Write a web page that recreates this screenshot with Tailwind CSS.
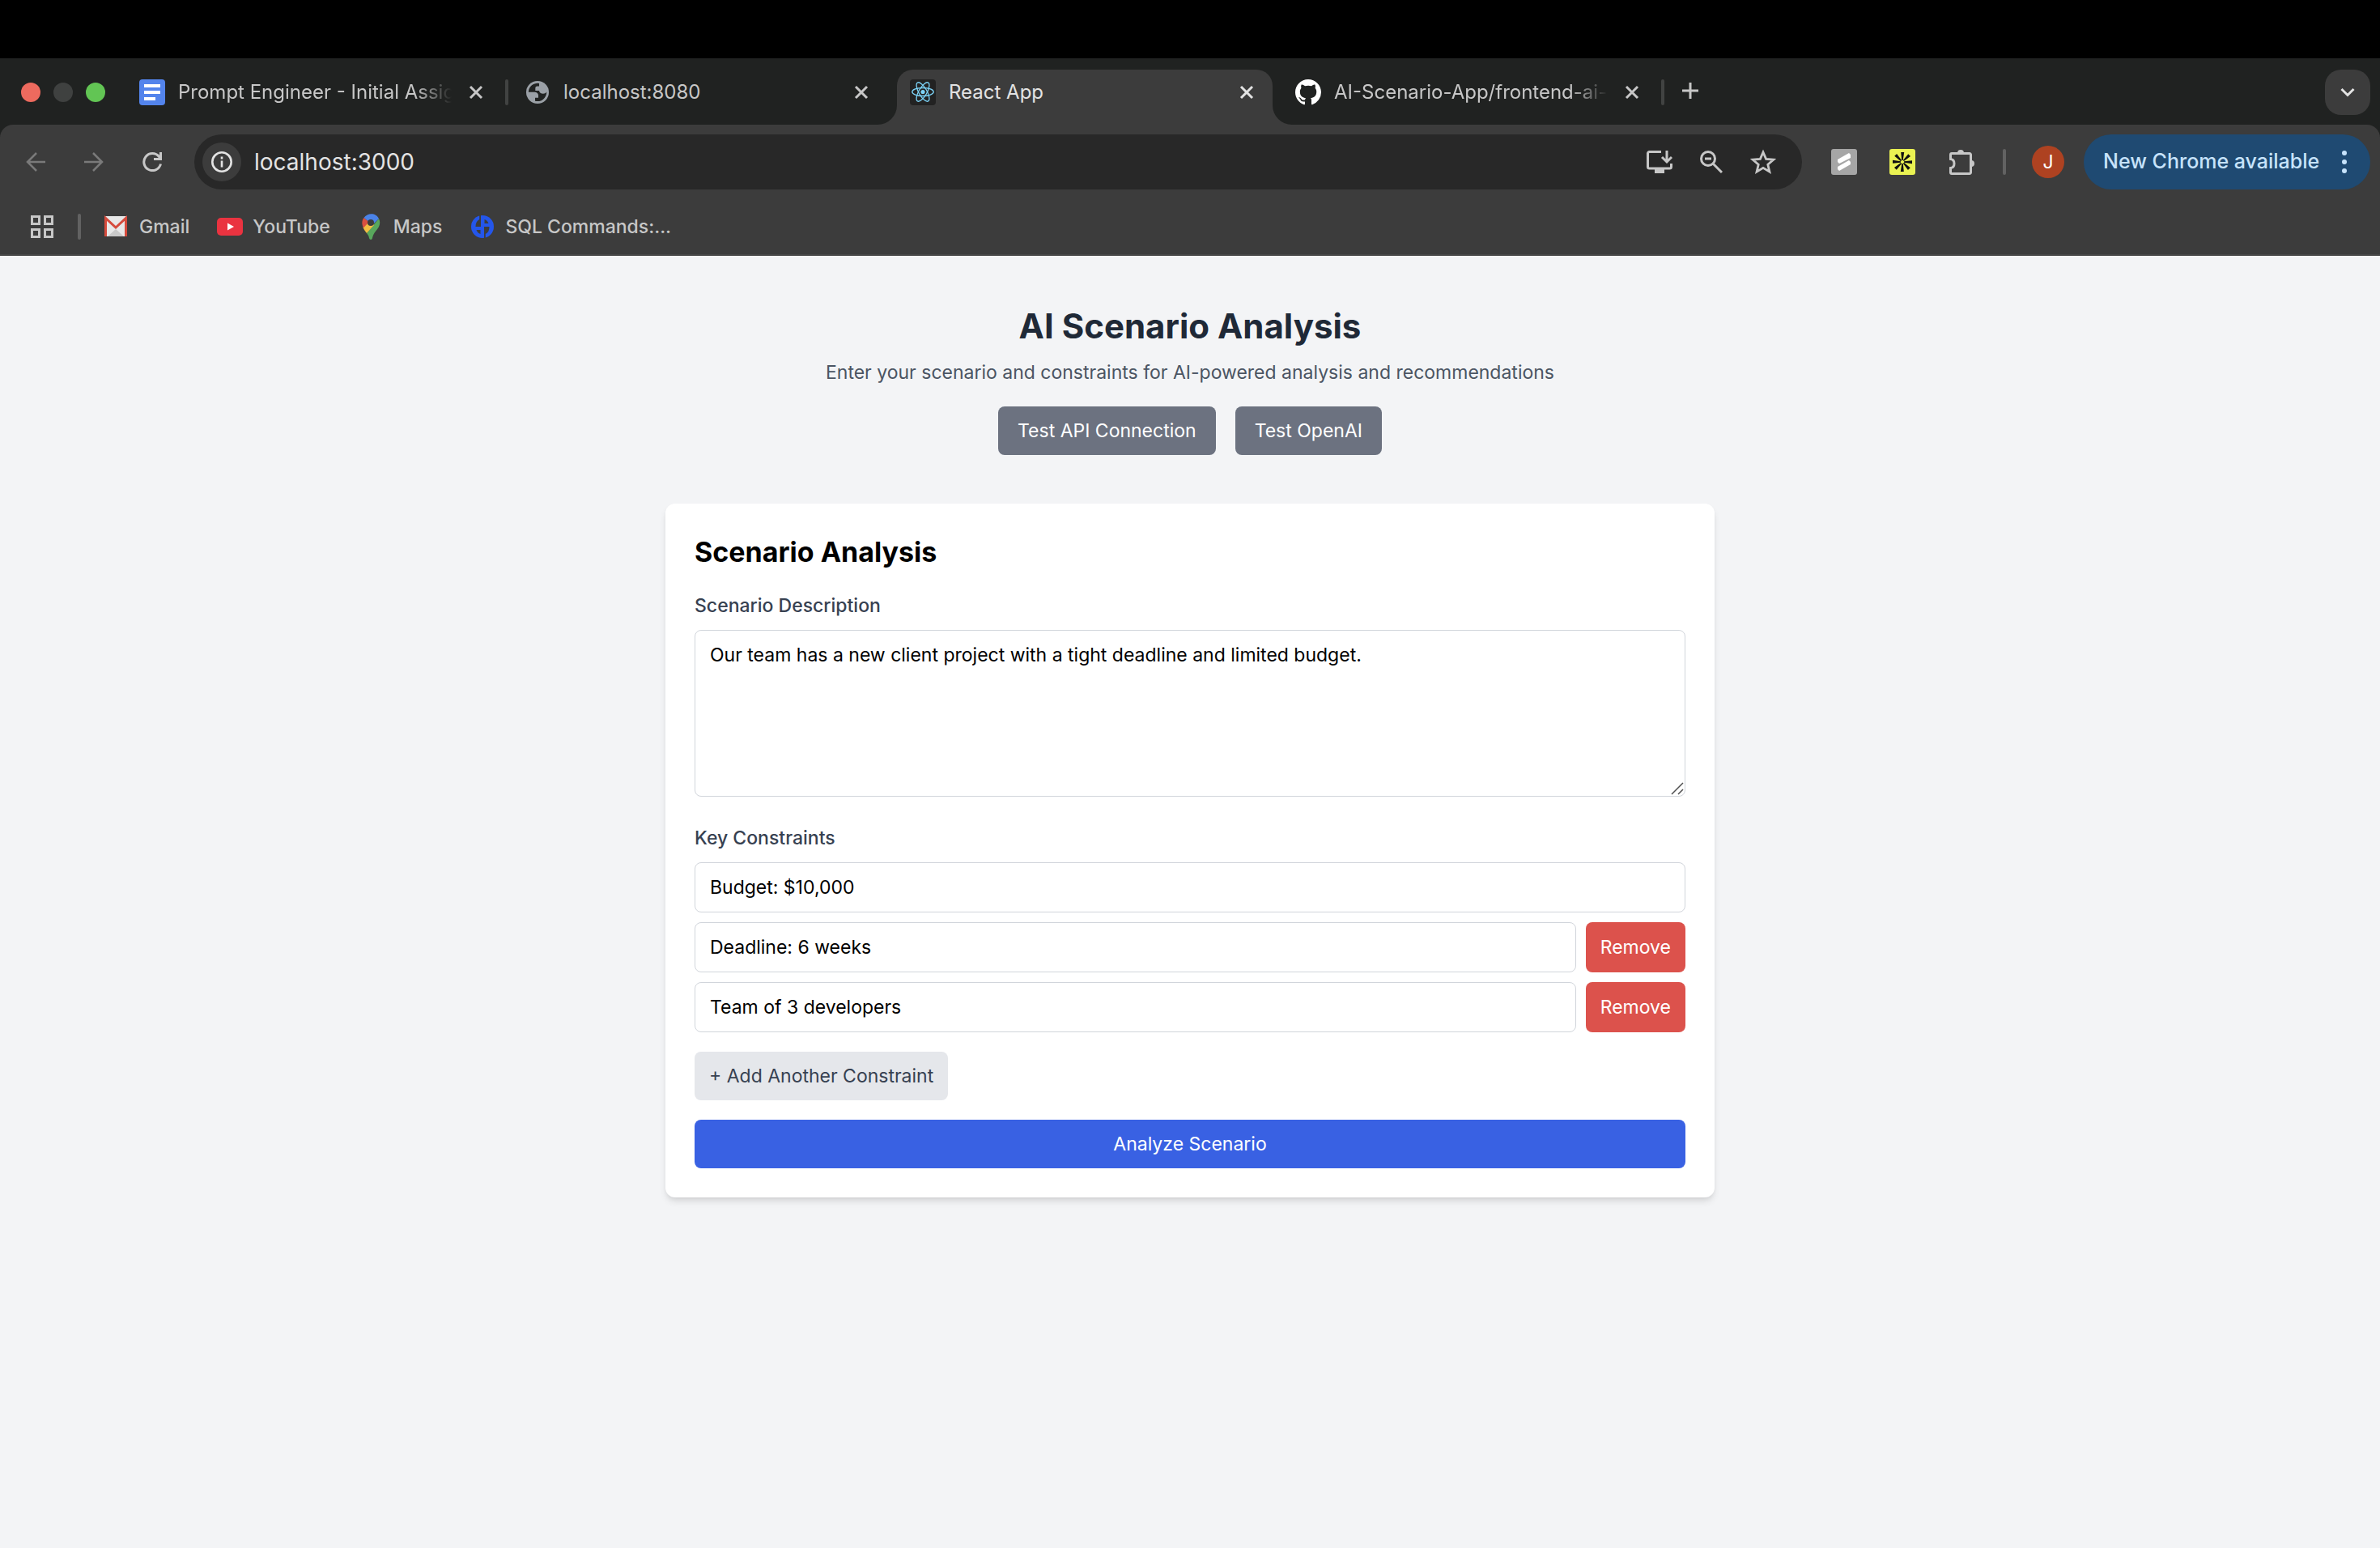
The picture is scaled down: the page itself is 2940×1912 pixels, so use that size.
<!DOCTYPE html>
<html lang="en">
<head>
<meta charset="utf-8">
<meta name="viewport" content="width=device-width, initial-scale=1">
<title>React App</title>
<script src="https://cdn.jsdelivr.net/npm/@tailwindcss/browser@4"></script>
</head>
<body class="flex min-h-screen flex-col bg-[#f3f4f6] font-['Inter',sans-serif]">

<div class="h-18 shrink-0 bg-black"></div>

<header class="shrink-0 bg-[#202221] text-[#c7c7c7]">
  <!-- Tab strip -->
  <div class="flex h-[82px] items-start pt-3.5 pr-3">
    <div class="flex h-14 w-[156px] shrink-0 items-center gap-4 pl-[26px]">
      <span class="size-6 rounded-full bg-[#ed6a5e]"></span>
      <span class="size-6 rounded-full bg-[#3f4140]"></span>
      <span class="size-6 rounded-full bg-[#62c554]"></span>
    </div>
    <nav class="flex items-start" aria-label="Tabs">
      <div class="flex h-14 w-[464px] items-center pr-5 pl-4">
        <svg class="mr-4 size-8 shrink-0" viewBox="0 0 32 32"><rect width="32" height="32" rx="4" fill="#5384ec"/><path fill="#fff" d="M6 6h20v4H6zM6 14h20v4H6zM6 22h14v4H6z"/></svg>
        <span class="flex-1 text-2xl whitespace-nowrap [mask-image:linear-gradient(to_right,#000_82%,transparent_95%)]">Prompt Engineer - Initial Assig</span>
        <button class="size-6" aria-label="Close tab"><svg viewBox="0 0 24 24" fill="none" stroke="currentColor" stroke-width="3"><path d="M5 5l14 14M19 5L5 19"/></svg></button>
      </div>
      <div class="flex h-14 w-3 items-center justify-center"><span class="h-8 w-1 rounded-full bg-[#414342]"></span></div>
      <div class="flex h-14 w-[464px] items-center pr-5 pl-4">
        <svg class="mr-4 size-8 shrink-0" viewBox="0 0 32 32"><circle cx="16" cy="16" r="14" fill="#9aa0a6"/><path fill="#202221" d="M18 5A11.200 11.200 0 0 0 4.800 15.700H12c3.300 0 5 1.700 5 4v3h-4v4A11.200 11.200 0 0 0 27.200 15.500c-1 1.700-2.500 2.200-4.200 2.200-3 0-4.500-1-5-3.700h-4.700v-3c0-1.700 1-2.500 2.400-2.500H18z"/></svg>
        <span class="flex-1 text-2xl whitespace-nowrap">localhost:8080</span>
        <button class="size-6" aria-label="Close tab"><svg viewBox="0 0 24 24" fill="none" stroke="currentColor" stroke-width="3"><path d="M5 5l14 14M19 5L5 19"/></svg></button>
      </div>
      <div class="w-3"></div>
      <div class="relative flex h-[68px] w-[464px] items-center rounded-t-[20px] bg-[#3c3c3c] pr-5 pb-3 pl-4 text-[#e3e3e3]">
        <svg class="absolute right-full bottom-0 size-6" viewBox="0 0 24 24"><path fill="#3c3c3c" d="M24 0v24H0A24 24 0 0 0 24 0z"/></svg>
        <svg class="absolute bottom-0 left-full size-6" viewBox="0 0 24 24"><path fill="#3c3c3c" d="M0 0v24h24A24 24 0 0 1 0 0z"/></svg>
        <svg class="mr-4 size-8 shrink-0" viewBox="0 0 32 32"><rect width="32" height="32" rx="4" fill="#222"/><circle cx="16" cy="15.500" r="2.600" fill="#7cd3f7"/><g fill="none" stroke="#7cd3f7" stroke-width="1.300"><ellipse cx="16" cy="15.500" rx="13.200" ry="5"/><ellipse cx="16" cy="15.500" rx="13.200" ry="5" transform="rotate(60 16 15.500)"/><ellipse cx="16" cy="15.500" rx="13.200" ry="5" transform="rotate(120 16 15.500)"/></g></svg>
        <span class="flex-1 text-2xl whitespace-nowrap">React App</span>
        <button class="size-6" aria-label="Close tab"><svg viewBox="0 0 24 24" fill="none" stroke="currentColor" stroke-width="3"><path d="M5 5l14 14M19 5L5 19"/></svg></button>
      </div>
      <div class="w-3"></div>
      <div class="flex h-14 w-[464px] items-center pr-5 pl-4">
        <svg class="mr-4 size-8 shrink-0" viewBox="0 0 16 16"><path fill="#fff" d="M8 0C3.580 0 0 3.580 0 8c0 3.540 2.290 6.530 5.470 7.590.4.070.55-.17.55-.38 0-.19-.01-.82-.01-1.490-2.010.37-2.530-.49-2.690-.94-.09-.23-.48-.94-.82-1.130-.28-.15-.68-.52-.01-.53.63-.01 1.080.58 1.230.82.72 1.210 1.870.87 2.330.66.070-.52.28-.87.51-1.070-1.780-.2-3.640-.89-3.640-3.950 0-.87.31-1.590.82-2.150-.08-.2-.36-1.020.08-2.120 0 0 .67-.21 2.200.82.64-.18 1.320-.27 2-.27s1.360.09 2 .27c1.530-1.040 2.200-.82 2.200-.82.44 1.100.16 1.920.08 2.120.51.56.82 1.270.82 2.150 0 3.070-1.870 3.750-3.650 3.950.29.25.54.73.54 1.480 0 1.070-.01 1.930-.01 2.200 0 .21.15.46.55.38A8.010 8.010 0 0 0 16 8c0-4.420-3.580-8-8-8z"/></svg>
        <span class="flex-1 text-2xl whitespace-nowrap [mask-image:linear-gradient(to_right,#000_82%,transparent_95%)]">AI-Scenario-App/frontend-ai-</span>
        <button class="size-6" aria-label="Close tab"><svg viewBox="0 0 24 24" fill="none" stroke="currentColor" stroke-width="3"><path d="M5 5l14 14M19 5L5 19"/></svg></button>
      </div>
      <div class="flex h-14 w-3 items-center justify-center"><span class="h-8 w-1 rounded-full bg-[#414342]"></span></div>
    </nav>
    <button class="flex size-14 items-center justify-center" aria-label="New tab"><svg class="size-6" viewBox="0 0 24 24" fill="none" stroke="currentColor" stroke-width="3"><path d="M12 0v20M2 10h20"/></svg></button>
    <button class="ml-auto flex size-14 items-center justify-center rounded-[20px] bg-[#3c3c3c] text-[#e3e3e3]" aria-label="Search tabs"><svg class="size-6" viewBox="0 0 24 24" fill="none" stroke="currentColor" stroke-width="3"><path d="M4.500 8l7.500 7.500L19.500 8"/></svg></button>
  </div>

  <div class="rounded-t-2xl border-b-2 border-[#474747] bg-[#3c3c3c]">
    <!-- Toolbar -->
    <div class="flex h-[92px] items-center pr-3 pl-8">
      <div class="flex gap-12 text-[#7a7a7a]">
        <button aria-label="Back"><svg class="size-6" viewBox="0 0 24 24" fill="none" stroke="currentColor" stroke-width="2.500"><path d="M24 12H2M13 1L2 12l11 11"/></svg></button>
        <button aria-label="Forward"><svg class="size-6" viewBox="0 0 24 24" fill="none" stroke="currentColor" stroke-width="2.500"><path d="M0 12h22M11 1l11 11-11 11"/></svg></button>
        <button class="text-[#c7c7c7]" aria-label="Reload"><svg class="size-6" viewBox="0 0 24 24" fill="none" stroke="currentColor" stroke-width="3"><path d="M22.500 14.500A10.500 10.500 0 1 1 20.500 5.500l2 2.500M22.500 0v8.500H14"/></svg></button>
      </div>
      <div class="ml-10 flex h-[68px] flex-1 items-center rounded-full bg-[#282828] pr-8 pl-2.5">
        <button class="flex size-12 items-center justify-center rounded-full bg-[#3c3c3c] text-[#e3e3e3]" aria-label="Site information"><svg class="size-[26px]" viewBox="0 0 26 26" fill="none" stroke="currentColor" stroke-width="2.600"><circle cx="13" cy="13" r="11.700"/><path d="M13 11.500v8M13 6.500v3"/></svg></button>
        <input class="ml-4 min-w-0 flex-1 bg-transparent text-[28px] text-[#e3e3e3] outline-none" type="text" aria-label="Address" value="localhost:3000">
        <div class="flex items-center gap-[34px]">
          <button aria-label="Install app"><svg class="size-8" viewBox="0 0 32 32" fill="none" stroke="currentColor" stroke-width="3"><path d="M18 3.500H3.500a2 2 0 0 0-2 2V22a2 2 0 0 0 2 2h25a2 2 0 0 0 2-2v-4M25 2v13M19 10l6 6 6-6"/><path fill="currentColor" stroke="none" d="M10 24h12v6H10z"/></svg></button>
          <button aria-label="Zoom"><svg class="h-8 w-7" viewBox="0 0 28 32" fill="none" stroke="currentColor" stroke-width="3"><circle cx="10" cy="12" r="8.500"/><path d="M16 18l11 11M6 12h8"/></svg></button>
          <button aria-label="Bookmark this page"><svg class="size-8" viewBox="0 0 32 32" fill="none" stroke="currentColor" stroke-width="2.800"><path d="M16 4l3.600 8.400 9.100.8-6.900 6 2.100 8.900L16 23.300l-7.900 4.800 2.100-8.900-6.900-6 9.100-.8z"/></svg></button>
        </div>
      </div>
      <div class="flex items-center gap-10 pl-9">
        <button aria-label="Scribe"><svg class="size-8" viewBox="0 0 32 32"><rect width="32" height="32" rx="3" fill="#a6a6a6"/><path fill="#fff" d="M8 13l14-8 2 2v4l-14 7-2-2zM8 22l14-8 2 2v3l-14 8-2-2z"/></svg></button>
        <button aria-label="Extension"><svg class="size-8" viewBox="0 0 32 32"><rect width="32" height="32" rx="3" fill="#eaf252"/><g fill="#111"><path id="ray" d="M15.200 14l-1-10h4l-1.500 10z"/><use href="#ray" transform="rotate(45 16 16)"/><use href="#ray" transform="rotate(90 16 16)"/><use href="#ray" transform="rotate(135 16 16)"/><use href="#ray" transform="rotate(180 16 16)"/><use href="#ray" transform="rotate(225 16 16)"/><use href="#ray" transform="rotate(270 16 16)"/><use href="#ray" transform="rotate(315 16 16)"/></g></svg></button>
      </div>
      <div class="flex items-center pl-[42px]">
        <button aria-label="Extensions"><svg class="size-8" viewBox="0 0 32 32"><path fill="currentColor" d="M10 5a4 4 0 0 1 8 0zM27 14a4 4 0 0 1 0 8z"/><path fill="none" stroke="currentColor" stroke-width="3" d="M3 5.500h22a1.500 1.500 0 0 1 1.500 1.500v22a1.500 1.500 0 0 1-1.500 1.500H3A1.500 1.500 0 0 1 1.500 29v-5.500c3.400-.3 4.500-2.500 4.500-5.500s-1.100-5.200-4.500-5.500V7A1.500 1.500 0 0 1 3 5.500z"/></svg></button>
        <span class="mr-8 ml-[34px] h-8 w-1 rounded-full bg-[#626262]"></span>
        <button class="size-10 rounded-full bg-[#ae4221] text-[23px] text-white" aria-label="Profile">J</button>
      </div>
      <button class="ml-6 flex h-[68px] w-[354px] items-center justify-between rounded-full bg-[#1f4a72] pr-7 pl-6 text-[25px] font-medium text-[#c7e3fb]">New Chrome available <svg class="h-8 w-2" viewBox="0 0 8 32" fill="currentColor"><circle cx="4" cy="5" r="3"/><circle cx="4" cy="16" r="3"/><circle cx="4" cy="27" r="3"/></svg></button>
    </div>

    <!-- Bookmarks bar -->
    <nav class="flex h-17 items-center gap-[34px] pl-[38px] text-[23px] font-medium" aria-label="Bookmarks">
      <div class="flex items-center gap-7">
        <button aria-label="Apps"><svg class="size-7" viewBox="0 0 28 28" fill="none" stroke="currentColor" stroke-width="3"><path d="M1.500 1.500h9v9h-9zM17.500 1.500h9v9h-9zM1.500 17.500h9v9h-9zM17.500 17.500h9v9h-9z"/></svg></button>
        <span class="ml-0.5 h-8 w-1 rounded-full bg-[#626262]"></span>
        <a href="#" class="flex items-center gap-3"><svg class="size-8" viewBox="0 0 32 32"><rect x="1" y="3" width="28" height="25" rx="2" fill="#e8e8e8"/><path fill="#c9c9c9" d="M5 28l10-9 10 9z"/><path fill="none" stroke="#d54b3d" stroke-width="3" d="M2.500 28V5.500L15 17 27.500 5.500V28"/></svg>Gmail</a>
      </div>
      <a href="#" class="flex items-center gap-3"><svg class="size-8" viewBox="0 0 32 32"><rect y="5" width="32" height="22" rx="5" fill="#ea3340"/><path fill="#fff" d="M13 11.500l8 4.500-8 4.500z"/></svg>YouTube</a>
      <a href="#" class="flex items-center gap-3"><svg class="size-8" viewBox="0 0 32 32"><path fill="#58a75c" d="M26 6c3 6 0 11-3.500 15-2.500 3-4 6-4.500 9-.3 2.500-3.500 2.500-4 0-.4-2.500-1.500-4-3-6z"/><path fill="#f2be42" d="M8 12l10-1 2 3-9 10c-2-2.500-3.500-4.500-4.500-7z"/><path fill="#d95040" d="M7.500 5L14 10l-7 7.500C4.500 13 5 8 7.500 5z"/><path fill="#4b83e8" d="M7.500 5C12-1.500 22.500-1.500 26 6l-8 8-4-4z"/><circle cx="16" cy="11" r="4" fill="#3c3c3c"/></svg>Maps</a>
      <a href="#" class="flex items-center gap-3"><svg class="size-8" viewBox="0 0 32 32"><circle cx="16" cy="16" r="14" fill="#2456ea"/><g fill="#3c3c3c"><path id="half" d="M14 1.500V16H7.500c0-4.500 1.500-7.500 4.700-9V1.500zM8.500 20h5v5c-2.500-.8-4-2.500-5-5z"/><use href="#half" transform="rotate(180 16 16)"/></g></svg>SQL Commands:...</a>
    </nav>
  </div>
</header>

<main class="mx-auto w-full max-w-[1344px] px-6 py-15 text-[23px] leading-9">
  <div class="text-center">
    <h1 class="mb-3 text-[42px] leading-[54px] font-bold text-[#1f2937]">AI Scenario Analysis</h1>
    <p class="text-[#4b5563]">Enter your scenario and constraints for AI-powered analysis and recommendations</p>
    <div class="mt-6 flex justify-center gap-6">
      <button class="rounded-lg bg-[#6c7280] px-6 py-3 text-white">Test API Connection</button>
      <button class="rounded-lg bg-[#6c7280] px-6 py-3 text-white">Test OpenAI</button>
    </div>
  </div>

  <form class="mt-15 rounded-xl bg-white p-9 shadow-[0_6px_9px_-1px_rgba(0,0,0,0.1),0_3px_6px_-3px_rgba(0,0,0,0.1)]">
    <h2 class="mb-6 text-[34px] leading-12 font-bold text-black">Scenario Analysis</h2>
    <label for="description" class="mb-3 block font-medium text-[#374151]">Scenario Description</label>
    <div class="relative">
      <textarea id="description" rows="5" class="block w-full resize-none rounded-lg border border-[#d1d5db] px-[18px] py-3 text-black">Our team has a new client project with a tight deadline and limited budget.</textarea>
      <svg class="pointer-events-none absolute right-0.5 bottom-0.5 size-4" viewBox="0 0 16 16" fill="none" stroke="#4f4f4f" stroke-width="1.500"><path d="M1 15L15 1M9 15l6-6"/></svg>
    </div>
    <fieldset class="mt-[33px]">
      <legend class="mb-3 font-medium text-[#374151]">Key Constraints</legend>
      <div class="flex flex-col gap-3">
        <input aria-label="Constraint 1" type="text" value="Budget: $10,000" class="w-full rounded-lg border border-[#d1d5db] px-[18px] py-3 text-black">
        <div class="flex gap-3">
          <input aria-label="Constraint 2" type="text" value="Deadline: 6 weeks" class="min-w-0 flex-1 rounded-lg border border-[#d1d5db] px-[18px] py-3 text-black">
          <button type="button" class="rounded-lg bg-[#dc524c] px-[18px] text-white">Remove</button>
        </div>
        <div class="flex gap-3">
          <input aria-label="Constraint 3" type="text" value="Team of 3 developers" class="min-w-0 flex-1 rounded-lg border border-[#d1d5db] px-[18px] py-3 text-black">
          <button type="button" class="rounded-lg bg-[#dc524c] px-[18px] text-white">Remove</button>
        </div>
      </div>
    </fieldset>
    <button type="button" class="mt-6 block rounded-lg bg-[#e5e7eb] px-[18px] py-3 text-[#374151]">+ Add Another Constraint</button>
    <button type="button" class="mt-6 block w-full rounded-lg bg-[#3961e3] py-3 text-white">Analyze Scenario</button>
  </form>
</main>
</body>
</html>
